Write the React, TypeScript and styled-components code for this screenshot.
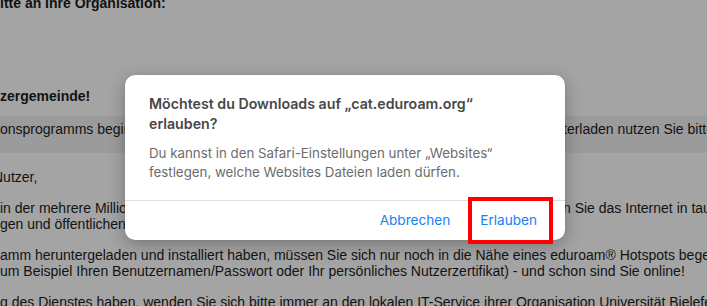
import React from 'react';
import styled, { createGlobalStyle } from 'styled-components';

const GlobalStyle = createGlobalStyle`
html, body {
    margin: 0;
    padding: 0;
    background: #a4a4a4;
    overflow: hidden;
}
`;

const App = () => {
    return (
        <>
            <GlobalStyle />
            <Screen>
                <Page>
                    <Line bold shift={0} gapTop={0}>itte an Ihre Organisation:</Line>
                    <Line bold shift={0} gapTop={77}>zergemeinde!</Line>
                    <Band>
                        <SplitLine>
                            <span>onsprogramms beginnen Sie bitte mit dem Herunterladen. Zum Hochladen und Herun</span>
                            <span>terladen nutzen Sie bitte den Button</span>
                        </SplitLine>
                    </Band>
                    <Line shift={-7} gapTop={16}>Nutzer,</Line>
                    <Paragraph>
                        <SplitLine>
                            <span>in der mehrere Millionen Nutzer weltweit an Universitäten, Hochschulen, Forschungseinrichtu</span>
                            <span>n Sie das Internet in tausenden</span>
                        </SplitLine>
                        <Line shift={0} gapTop={0}>gen und öffentlichen Einrichtungen kostenfrei und sicher nutzen können.</Line>
                    </Paragraph>
                    <Paragraph>
                        <Line shift={0} gapTop={0}>amm heruntergeladen und installiert haben, müssen Sie sich nur noch in die Nähe eines eduroam® Hotspots begeben</Line>
                        <Line shift={0} gapTop={0}>um Beispiel Ihren Benutzernamen/Passwort oder Ihr persönliches Nutzerzertifikat) - und schon sind Sie online!</Line>
                    </Paragraph>
                    <Paragraph>
                        <Line shift={0} gapTop={0}>g des Dienstes haben, wenden Sie sich bitte immer an den lokalen IT-Service ihrer Organisation Universität Bielefeld</Line>
                    </Paragraph>
                </Page>

                <Dialog>
                    <DialogBody>
                        <Title>Möchtest du Downloads auf „cat.eduroam.org“ erlauben?</Title>
                        <Message>Du kannst in den Safari-Einstellungen unter „Websites“ festlegen, welche Websites Dateien laden dürfen.</Message>
                    </DialogBody>
                    <Footer>
                        <Action>Abbrechen</Action>
                        <Action highlighted>Erlauben</Action>
                    </Footer>
                </Dialog>
            </Screen>
        </>
    )
}

const Screen = styled.div`
position: relative;
width: 707px;
height: 306px;
overflow: hidden;
background: #a4a4a4;
`;

const Page = styled.div`
display: flex;
flex-direction: column;
margin-top: -5px;
font-family: "Liberation Sans", Arial, sans-serif;
font-size: 14px;
line-height: 16px;
color: #121212;
`;

const Line = styled.div<{ bold?: boolean, shift: number, gapTop: number }>`
white-space: nowrap;
font-weight: ${p => p.bold ? 700 : 400};
text-indent: ${p => p.shift}px;
margin-top: ${p => p.gapTop}px;
`;

const Band = styled.div`
background: #9b9b9b;
margin-top: 12px;
padding: 5px 0 16px;
`;

const SplitLine = styled.div`
display: grid;
grid-template-columns: 563px 1fr;
white-space: nowrap;

span {
    overflow: hidden;
}
`;

const Paragraph = styled.div`
margin-top: 15px;
`;

const Dialog = styled.div`
position: absolute;
left: 125px;
top: 75px;
width: 440px;
background: #ffffff;
border-radius: 10px;
box-shadow: 0 5px 18px rgba(0, 0, 0, 0.28), 0 0 1px rgba(0, 0, 0, 0.2);
font-family: Inter, "Noto Sans", sans-serif;
`;

const DialogBody = styled.div`
padding: 19px 24px 18px;
border-bottom: 1px solid #dedede;
`;

const Title = styled.h1`
margin: 0;
font-size: 14.2px;
line-height: 20px;
font-weight: 600;
color: #474747;
width: 360px;
`;

const Message = styled.p`
margin: 10px 0 0;
font-size: 13.3px;
line-height: 19px;
color: #6c6c6c;
width: 380px;
`;

const Footer = styled.div`
display: flex;
justify-content: flex-end;
align-items: center;
gap: 30px;
height: 39px;
padding-right: 28px;
`;

const Action = styled.span<{ highlighted?: boolean }>`
position: relative;
font-size: 13.6px;
line-height: 17px;
color: #1a7ef5;

${p => p.highlighted && `
&::after {
    content: '';
    position: absolute;
    top: -15px;
    bottom: -15px;
    left: -12px;
    right: -16px;
    border: 4px solid #ff0000;
}
`}
`;

export default App;
